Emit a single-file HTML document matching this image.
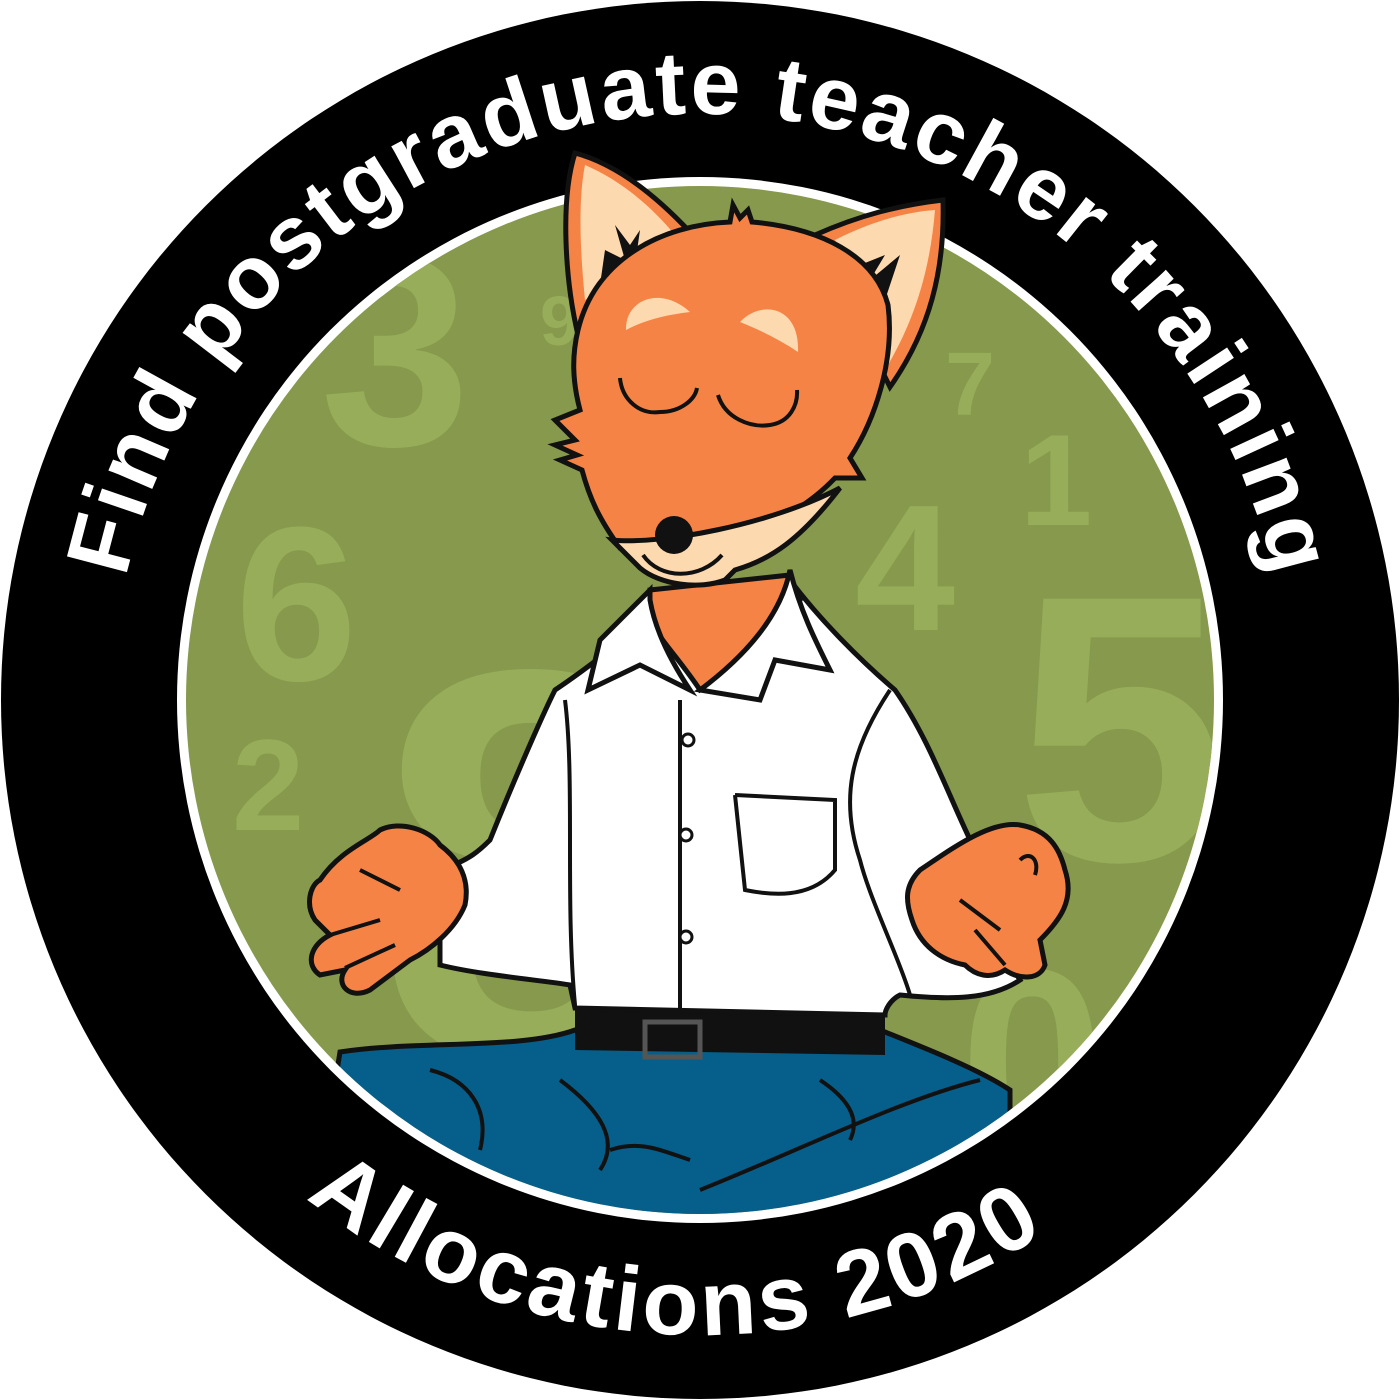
<!DOCTYPE html>
<html><head><meta charset="utf-8"><style>
html,body{margin:0;padding:0;background:#fff}
svg{display:block}
text{font-family:"Liberation Sans",sans-serif;font-weight:bold}
</style></head><body>
<svg width="1400" height="1400" viewBox="0 0 1400 1400">
<defs>
<clipPath id="g"><circle cx="700" cy="700" r="514"/></clipPath>
<path id="top" d="M126,578 A587,587 0 0 1 1274,578"/>
<path id="bot" d="M65,700 A635,635 0 0 0 1335,700"/>
</defs>
<circle cx="700" cy="700" r="699" fill="#000"/>
<circle cx="700" cy="700" r="523" fill="#fff"/>
<circle cx="700" cy="700" r="514" fill="#86994c"/>
<g clip-path="url(#g)" fill="#97ad5a" font-family="Liberation Sans" font-weight="bold">
<text x="320" y="445" font-size="270">3</text>
<text x="540" y="345" font-size="70">9</text>
<text x="945" y="415" font-size="90">7</text>
<text x="1020" y="525" font-size="130">1</text>
<text x="855" y="630" font-size="180">4</text>
<text x="1015" y="860" font-size="380">5</text>
<text x="235" y="680" font-size="220">6</text>
<text x="375" y="1060" font-size="560">8</text>
<text x="232" y="830" font-size="130">2</text>
<text x="960" y="1150" font-size="260">0</text>
<path d="M340,1052 C420,1040 520,1050 575,1030 L880,1030 C930,1050 980,1070 1010,1090 L1010,1300 L300,1300 Z" fill="#065f8a" stroke="#111" stroke-width="5"/>
<path d="M430,1070 C470,1080 490,1110 480,1150 M560,1080 C600,1110 620,1140 600,1170 M700,1190 C800,1150 900,1100 980,1080 M820,1080 C850,1100 860,1120 850,1140 M610,1150 C640,1140 660,1150 690,1160" fill="none" stroke="#111" stroke-width="4"/>
</g>
<path d="M575,1005 L885,1010 L885,1055 L575,1050 Z" fill="#111"/>
<rect x="645" y="1022" width="55" height="35" fill="none" stroke="#555" stroke-width="5"/>
<path d="M555,690 C600,660 620,640 650,620 L790,580 C820,620 860,660 895,690 C930,740 950,800 975,850 C990,900 1000,950 1020,980 C990,1000 950,1000 900,995 C890,1000 885,1010 885,1015 L575,1008 L570,985 C540,980 480,975 440,965 L440,870 C470,860 480,850 490,840 C510,790 540,720 555,690 Z" fill="#fff" stroke="#111" stroke-width="5"/>
<path d="M575,1005 C565,900 575,780 565,700 M890,690 C850,750 840,800 860,860 C870,900 900,960 910,995 M680,700 L680,1015 M735,795 L835,800 L835,870 C810,900 770,895 745,890 L735,795" fill="none" stroke="#111" stroke-width="4"/>
<circle cx="688" cy="740" r="6" fill="#fff" stroke="#111" stroke-width="3"/>
<circle cx="686" cy="835" r="6" fill="#fff" stroke="#111" stroke-width="3"/>
<circle cx="686" cy="937" r="6" fill="#fff" stroke="#111" stroke-width="3"/>
<path d="M650,590 L790,575 L800,600 C770,640 740,670 700,690 C680,660 660,640 650,620 Z" fill="#f58345" stroke="#111" stroke-width="5"/>
<path d="M650,590 L600,640 L588,690 L640,665 L690,690 C670,660 655,630 650,600 Z" fill="#fff" stroke="#111" stroke-width="5"/>
<path d="M790,570 C800,610 815,640 830,670 L775,660 L760,700 L700,690 C740,660 780,620 790,570 Z" fill="#fff" stroke="#111" stroke-width="5"/>
<path d="M320,880 C340,850 370,840 380,830 C400,820 430,830 440,845 C460,860 470,880 465,905 C455,930 430,950 410,960 L370,990 C350,1000 335,985 345,970 L320,975 C305,965 310,945 330,935 L315,920 C305,905 310,885 320,880 Z" fill="#f58345" stroke="#111" stroke-width="5"/>
<path d="M360,870 L400,890 M330,935 L380,920 M345,968 L395,945" fill="none" stroke="#111" stroke-width="4"/>
<path d="M920,870 C950,850 990,820 1020,825 C1050,830 1060,850 1065,870 C1075,900 1060,920 1040,940 L1045,965 C1040,980 1020,980 1005,970 C990,980 975,975 965,965 C940,960 920,945 912,920 C905,900 905,885 920,870 Z" fill="#f58345" stroke="#111" stroke-width="5"/>
<path d="M1020,860 C1030,850 1040,860 1035,875 M960,900 L1000,930 M975,930 L1005,965" fill="none" stroke="#111" stroke-width="4"/>
<path d="M578,335 C565,280 560,200 575,153 C620,165 660,200 690,232 Z" fill="#f58345" stroke="#111" stroke-width="5"/>
<path d="M585,300 C580,250 578,200 585,165 C620,180 650,205 675,235 Z" fill="#fdd9b0"/>
<path d="M605,250 L625,260 L615,225 L630,245 L640,230 L635,265 L600,285 Z" fill="#111"/>
<path d="M815,235 C860,215 900,205 943,200 C945,270 930,330 890,387 Z" fill="#f58345" stroke="#111" stroke-width="5"/>
<path d="M835,240 C870,222 905,212 935,210 C930,270 915,320 885,370 Z" fill="#fdd9b0"/>
<path d="M860,265 L885,255 L870,280 L900,255 L885,300 Z" fill="#111"/>
<path d="M578,330 C595,260 660,225 730,222 L733,205 L740,218 L748,210 L752,222 C820,228 875,255 888,305 C895,360 875,420 850,458 L862,478 L835,478 C800,515 745,540 690,550 L620,548 C600,520 590,500 582,470 L560,460 L577,455 L555,445 L575,440 L555,420 L580,410 C572,380 572,355 578,330 Z" fill="#f58345" stroke="#111" stroke-width="5"/>
<path d="M612,540 C660,545 770,525 840,488 C800,540 770,560 735,570 L725,580 C700,590 660,585 640,568 Z" fill="#fdd9b0" stroke="#111" stroke-width="5"/>
<path d="M626,330 C625,300 660,285 690,312 C665,315 645,320 626,330 Z" fill="#fdd9b0"/>
<path d="M740,322 C760,300 800,305 798,352 C780,340 760,330 740,322 Z" fill="#fdd9b0"/>
<path d="M620,378 C622,400 640,415 660,412 C680,412 695,400 697,388 M718,395 C725,418 750,428 770,425 C790,422 798,405 797,390" fill="none" stroke="#111" stroke-width="4"/>
<circle cx="674" cy="535" r="19" fill="#111"/>
<path d="M643,555 C660,580 700,580 722,555" fill="none" stroke="#111" stroke-width="4"/>
<text font-size="90" fill="#fff"><textPath href="#top" startOffset="0" textLength="1595" lengthAdjust="spacing">Find postgraduate teacher training</textPath></text>
<text font-size="92" fill="#fff"><textPath href="#bot" startOffset="572" textLength="790" lengthAdjust="spacing">Allocations 2020</textPath></text>
</svg>
</body></html>
